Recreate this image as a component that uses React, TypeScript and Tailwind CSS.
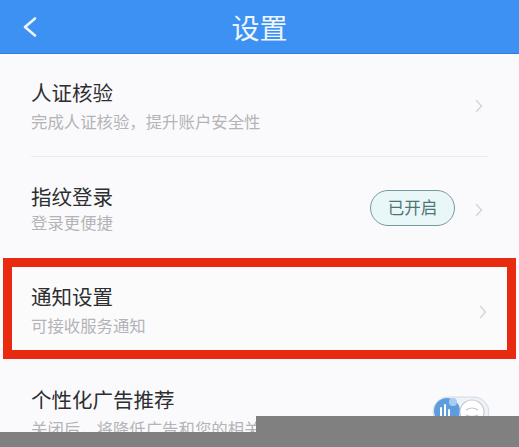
import React from 'react';

const font = { fontFamily: '"Noto Sans CJK SC", "Noto Sans", sans-serif' };

function Chevron({ className }: { className?: string }) {
  return (
    <svg viewBox="0 0 8 14" className={className} fill="none">
      <path d="M1.5 1.5 L6.5 7 L1.5 12.5" stroke="#d6d6d8" strokeWidth="1.6" strokeLinecap="round" strokeLinejoin="round" />
    </svg>
  );
}

function ItemText({ title, sub, gap = 'mt-[4px]' }: { title: string; sub: string; gap?: string }) {
  return (
    <div className="flex flex-col">
      <div className="text-[20.5px] leading-[28px] text-[#2e2e30]">{title}</div>
      <div className={`text-[16.4px] leading-[22px] text-[#b4b4b8] whitespace-nowrap ${gap}`}>{sub}</div>
    </div>
  );
}

function Toggle() {
  return (
    <svg width="58" height="32" viewBox="0 0 58 32" className="shrink-0">
      <rect x="1" y="1" width="56" height="30" rx="15" fill="#eef1f5" stroke="#d5dbe3" />
      <circle cx="15" cy="15" r="13" fill="#5d9ddf" />
      <circle cx="21" cy="6" r="4" fill="#a9cdf0" />
      <path d="M9 22 V12 M13 22 V9 M17 22 V14" stroke="#ffffff" strokeWidth="2" strokeLinecap="round" />
      <circle cx="40" cy="16" r="12" fill="#ffffff" stroke="#c8ccd2" strokeWidth="1.2" />
      <path d="M34 14 q6 -4 12 0 M34 19 q6 3 12 0" stroke="#c2c6cc" strokeWidth="1.2" fill="none" />
    </svg>
  );
}

export default function App() {
  return (
    <div className="relative h-[447px] w-[519px] overflow-hidden bg-[#fafafc]" style={font}>
      {/* Top bar */}
      <div className="grid h-[53px] grid-cols-[60px_1fr_60px] items-center bg-[#3d91f2] shadow-[0_1px_0_#2f7fd8]">
        <div className="flex items-center pl-[22px]">
          <svg width="16" height="20" viewBox="0 0 16 20" fill="none">
            <path d="M13 1.5 L3 10 L13 18.5" stroke="#eef5ff" strokeWidth="2.6" strokeLinecap="round" strokeLinejoin="round" />
          </svg>
        </div>
        <div className="text-center text-[28px] leading-[36px] text-[#eef6ff]">设置</div>
        <div />
      </div>

      {/* 人证核验 */}
      <div className="mx-[31px] flex h-[104px] items-center justify-between border-b border-[#ebebee] pr-[5px]">
        <ItemText title="人证核验" sub="完成人证核验，提升账户安全性" />
        <Chevron className="mt-[2px] h-[14px] w-[8px]" />
      </div>

      {/* 指纹登录 */}
      <div className="flex h-[101px] items-center justify-between pl-[31px] pr-[36px]">
        <ItemText title="指纹登录" sub="登录更便捷" gap="mt-[1px]" />
        <div className="flex items-center gap-[20px]">
          <div className="flex h-[36px] w-[85px] items-center justify-center rounded-full border-[1.5px] border-[#759b9b] bg-[#eaf7f8] text-[16.5px] text-[#4f7474]">
            已开启
          </div>
          <Chevron className="mt-[4px] h-[14px] w-[8px]" />
        </div>
      </div>

      {/* 通知设置 (highlighted) */}
      <div className="mx-[3px] h-[101px] border-[9px] border-[#e82a10] bg-[#fbfbfc]">
        <div className="flex h-full items-center justify-between pl-[19px] pr-[20px]">
          <ItemText title="通知设置" sub="可接收服务通知" />
          <Chevron className="mt-[6px] h-[14px] w-[8px]" />
        </div>
      </div>

      {/* 个性化广告推荐 */}
      <div className="flex items-start justify-between pl-[31px] pr-[29px] pt-[26px]">
        <ItemText title="个性化广告推荐" sub="关闭后，将降低广告和您的相关度" />
        <div className="mt-[11px]">
          <Toggle />
        </div>
      </div>

      {/* grey cover strips at the bottom */}
      <div className="absolute bottom-0 left-0 h-[15px] w-[256px] bg-[#808080]" />
      <div className="absolute bottom-0 right-0 h-[31px] w-[263px] bg-[#808080]" />
    </div>
  );
}
